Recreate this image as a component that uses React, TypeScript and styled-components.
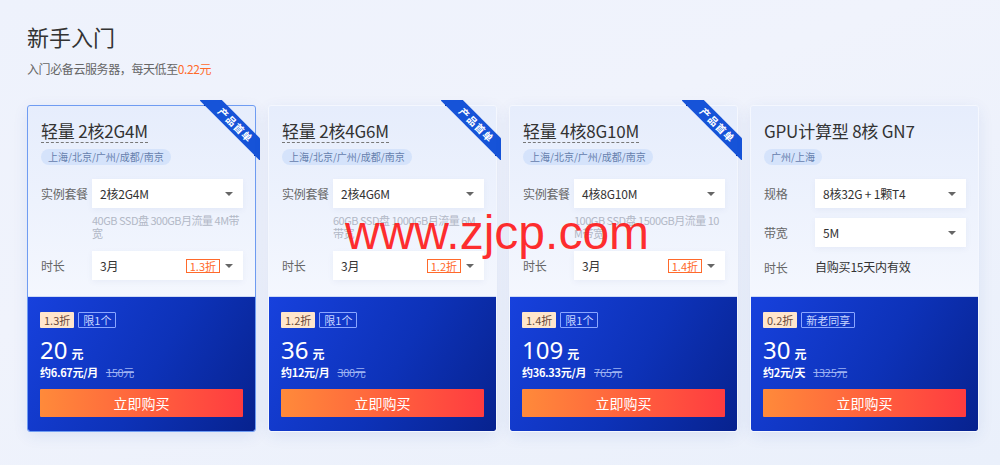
import React from "react";
import styled, { createGlobalStyle } from "styled-components";

const Global = createGlobalStyle`
  html, body { margin: 0; padding: 0; }
  body {
    width: 1000px;
    height: 465px;
    overflow: hidden;
    font-family: "Noto Sans CJK SC", "Noto Sans", sans-serif;
    background: linear-gradient(160deg, #eef2fc 0%, #f0f3fc 40%, #eaf0fb 100%);
  }
`;

const Page = styled.div`
  position: relative;
  padding: 20px 0 0 27px;
  height: 465px;
  box-sizing: border-box;
`;

const Title = styled.h1`
  margin: 0;
  font-size: 22px;
  line-height: 32px;
  font-weight: 400;
  color: #333;
`;

const Sub = styled.div`
  margin-top: 8px;
  font-size: 12px;
  line-height: 18px;
  color: #666;
  letter-spacing: -0.4px;
`;

const Orange = styled.span`
  color: #ff6a2b;
`;

const Cards = styled.div`
  display: flex;
  gap: 14px;
  margin-top: 28px;
  margin-left: 1px;
`;

const Card = styled.div<{ $active?: boolean }>`
  position: relative;
  width: 227px;
  box-sizing: border-box;
  border-radius: 2px;
  box-shadow: 0 4px 16px rgba(40, 80, 170, 0.1);
  outline: ${(p) => (p.$active ? "1px solid #6f9cf2" : "1px solid #f4f7fe")};
  display: flex;
  flex-direction: column;
`;

const Top = styled.div`
  height: 191px;
  box-sizing: border-box;
  padding: 13px 12px 0 13px;
  background: linear-gradient(180deg, #e6edfc 0%, #f4f7fe 100%);
  border-bottom: 1px solid #cfdbf5;
`;

const CardTitle = styled.div<{ $dashed?: boolean }>`
  display: inline-block;
  font-size: 17px;
  line-height: 22px;
  color: #333;
  letter-spacing: -0.2px;
  border-bottom: ${(p) => (p.$dashed ? "1px dashed #777" : "1px solid transparent")};
`;

const RegionTag = styled.div`
  display: block;
  width: fit-content;
  margin-top: 6px;
  height: 16px;
  line-height: 16px;
  padding: 0 7px;
  border-radius: 8px;
  background: #d5e3fb;
  color: #6580ad;
  font-size: 10px;
`;

const Rows = styled.div`
  margin-top: 14px;
  display: flex;
  flex-direction: column;
  gap: 10px;
`;

const Row = styled.div`
  display: flex;
  align-items: center;
`;

const Label = styled.div`
  width: 51px;
  flex: none;
  font-size: 12px;
  color: #666;
  letter-spacing: -0.3px;
`;

const Select = styled.div`
  position: relative;
  width: 151px;
  height: 29px;
  box-sizing: border-box;
  background: #fff;
  box-shadow: 0 2px 6px rgba(60, 90, 160, 0.06);
  display: flex;
  align-items: center;
  padding: 0 10px 0 8px;
  font-size: 12px;
  color: #333;
`;

const SelText = styled.span`
  flex: 1;
  letter-spacing: -0.2px;
`;

const Caret = styled.span`
  width: 0;
  height: 0;
  border-left: 4px solid transparent;
  border-right: 4px solid transparent;
  border-top: 4px solid #666;
  margin-left: 5px;
`;

const Discount = styled.span`
  border: 1px solid #ff6a2b;
  color: #ff6a2b;
  font-size: 11px;
  line-height: 12px;
  padding: 0 3px;
`;

const Desc = styled.div`
  margin: 6px 0 1px 51px;
  width: 152px;
  font-size: 11px;
  line-height: 13px;
  color: #b2b8c6;
  letter-spacing: -0.5px;
  word-break: break-all;
`;

const PlainText = styled.div`
  font-size: 12px;
  color: #333;
  line-height: 20px;
  letter-spacing: -0.2px;
`;

const Bottom = styled.div`
  padding: 15px 12px 14px 12px;
  background: linear-gradient(120deg, #1741dd 0%, #0d32b8 55%, #07228e 100%);
  border-radius: 0 0 2px 2px;
`;

const Tags = styled.div`
  display: flex;
  gap: 4px;
`;

const PeachTag = styled.span`
  height: 16px;
  line-height: 16px;
  padding: 0 4px;
  font-size: 11px;
  background: #ffe6cc;
  color: #6b4a3a;
  border-radius: 1px;
`;

const OutlineTag = styled.span`
  height: 14px;
  line-height: 14px;
  padding: 0 4px;
  font-size: 11px;
  border: 1px solid #8aa6ff;
  color: #c9d6ff;
  border-radius: 1px;
`;

const Price = styled.div`
  margin-top: 8px;
  height: 28px;
  display: flex;
  align-items: baseline;
  color: #fff;
`;

const PriceNum = styled.span`
  font-size: 24px;
  line-height: 28px;
  font-family: "Noto Sans", "Noto Sans CJK SC", sans-serif;
`;

const PriceUnit = styled.span`
  font-size: 12px;
  font-weight: 700;
  margin-left: 4px;
`;

const PerLine = styled.div`
  height: 16px;
  line-height: 16px;
  font-size: 11px;
  font-weight: 700;
  color: #fff;
  display: flex;
  gap: 8px;
  letter-spacing: -0.3px;
`;

const Strike = styled.span`
  font-weight: 400;
  color: #9db2f2;
  text-decoration: line-through;
`;

const BuyButton = styled.button`
  margin-top: 9px;
  width: 100%;
  height: 28px;
  border: none;
  border-radius: 1px;
  background: linear-gradient(90deg, #ff8a3a 0%, #ff3c40 100%);
  color: #fff;
  font-size: 14px;
  font-family: "Noto Sans CJK SC", sans-serif;
  cursor: pointer;
`;

const Ribbon = styled.div`
  position: absolute;
  top: -6px;
  right: -5px;
  width: 60px;
  height: 60px;
  overflow: hidden;
`;

const Fold = styled.span<{ $end?: boolean }>`
  position: absolute;
  width: 6px;
  height: 6px;
  background: #0a2f95;
  ${(p) => (p.$end ? "right: 0; bottom: 4px;" : "left: 4px; top: 0;")}
`;

const Band = styled.div`
  position: absolute;
  left: -7px;
  top: 17px;
  width: 85px;
  height: 16px;
  transform: rotate(45deg);
  background: #1653d8;
  color: #fff;
  font-size: 10px;
  line-height: 16px;
  text-align: center;
  letter-spacing: 1px;
  font-weight: 700;
`;

const Watermark = styled.div`
  position: absolute;
  left: 345px;
  top: 209px;
  font-family: "Liberation Sans", Arial, sans-serif;
  font-size: 48px;
  line-height: 48px;
  color: rgba(255, 25, 25, 0.92);
  pointer-events: none;
  white-space: nowrap;
`;

type Plan = {
  title: string;
  dashed: boolean;
  regions: string;
  ribbon: boolean;
  active?: boolean;
  spec: string;
  desc: string;
  discount: string;
  tag2: string;
  price: string;
  per: string;
  orig: string;
};

const plans: Plan[] = [
  {
    title: "轻量 2核2G4M",
    dashed: true,
    regions: "上海/北京/广州/成都/南京",
    ribbon: true,
    active: true,
    spec: "2核2G4M",
    desc: "40GB SSD盘 300GB月流量 4M带宽",
    discount: "1.3折",
    tag2: "限1个",
    price: "20",
    per: "约6.67元/月",
    orig: "150元",
  },
  {
    title: "轻量 2核4G6M",
    dashed: true,
    regions: "上海/北京/广州/成都/南京",
    ribbon: true,
    spec: "2核4G6M",
    desc: "60GB SSD盘 1000GB月流量 6M带宽",
    discount: "1.2折",
    tag2: "限1个",
    price: "36",
    per: "约12元/月",
    orig: "300元",
  },
  {
    title: "轻量 4核8G10M",
    dashed: true,
    regions: "上海/北京/广州/成都/南京",
    ribbon: true,
    spec: "4核8G10M",
    desc: "100GB SSD盘 1500GB月流量 10M带宽",
    discount: "1.4折",
    tag2: "限1个",
    price: "109",
    per: "约36.33元/月",
    orig: "765元",
  },
];

const BottomPart: React.FC<{ discount: string; tag2: string; price: string; per: string; orig: string }> = ({
  discount,
  tag2,
  price,
  per,
  orig,
}) => (
  <Bottom>
    <Tags>
      <PeachTag>{discount}</PeachTag>
      <OutlineTag>{tag2}</OutlineTag>
    </Tags>
    <Price>
      <PriceNum>{price}</PriceNum>
      <PriceUnit>元</PriceUnit>
    </Price>
    <PerLine>
      <span>{per}</span>
      <Strike>{orig}</Strike>
    </PerLine>
    <BuyButton>立即购买</BuyButton>
  </Bottom>
);

export default function App() {
  return (
    <>
      <Global />
      <Page>
        <Title>新手入门</Title>
        <Sub>
          入门必备云服务器，每天低至<Orange>0.22元</Orange>
        </Sub>
        <Cards>
          {plans.map((p) => (
            <Card key={p.title} $active={p.active}>
              <Top>
                <CardTitle $dashed={p.dashed}>{p.title}</CardTitle>
                <RegionTag>{p.regions}</RegionTag>
                <Rows>
                  <div>
                    <Row>
                      <Label>实例套餐</Label>
                      <Select>
                        <SelText>{p.spec}</SelText>
                        <Caret />
                      </Select>
                    </Row>
                    <Desc>{p.desc}</Desc>
                  </div>
                  <Row>
                    <Label>时长</Label>
                    <Select>
                      <SelText>3月</SelText>
                      <Discount>{p.discount}</Discount>
                      <Caret />
                    </Select>
                  </Row>
                </Rows>
              </Top>
              <BottomPart discount={p.discount} tag2={p.tag2} price={p.price} per={p.per} orig={p.orig} />
              {p.ribbon && (
                <Ribbon>
                  <Fold />
                  <Fold $end />
                  <Band>产品首单</Band>
                </Ribbon>
              )}
            </Card>
          ))}
          <Card>
            <Top>
              <CardTitle>GPU计算型 8核 GN7</CardTitle>
              <RegionTag>广州/上海</RegionTag>
              <Rows>
                <Row>
                  <Label>规格</Label>
                  <Select>
                    <SelText>8核32G + 1颗T4</SelText>
                    <Caret />
                  </Select>
                </Row>
                <Row>
                  <Label>带宽</Label>
                  <Select>
                    <SelText>5M</SelText>
                    <Caret />
                  </Select>
                </Row>
                <Row>
                  <Label>时长</Label>
                  <PlainText>自购买15天内有效</PlainText>
                </Row>
              </Rows>
            </Top>
            <BottomPart discount="0.2折" tag2="新老同享" price="30" per="约2元/天" orig="1325元" />
          </Card>
        </Cards>
        <Watermark>www.zjcp.com</Watermark>
      </Page>
    </>
  );
}
